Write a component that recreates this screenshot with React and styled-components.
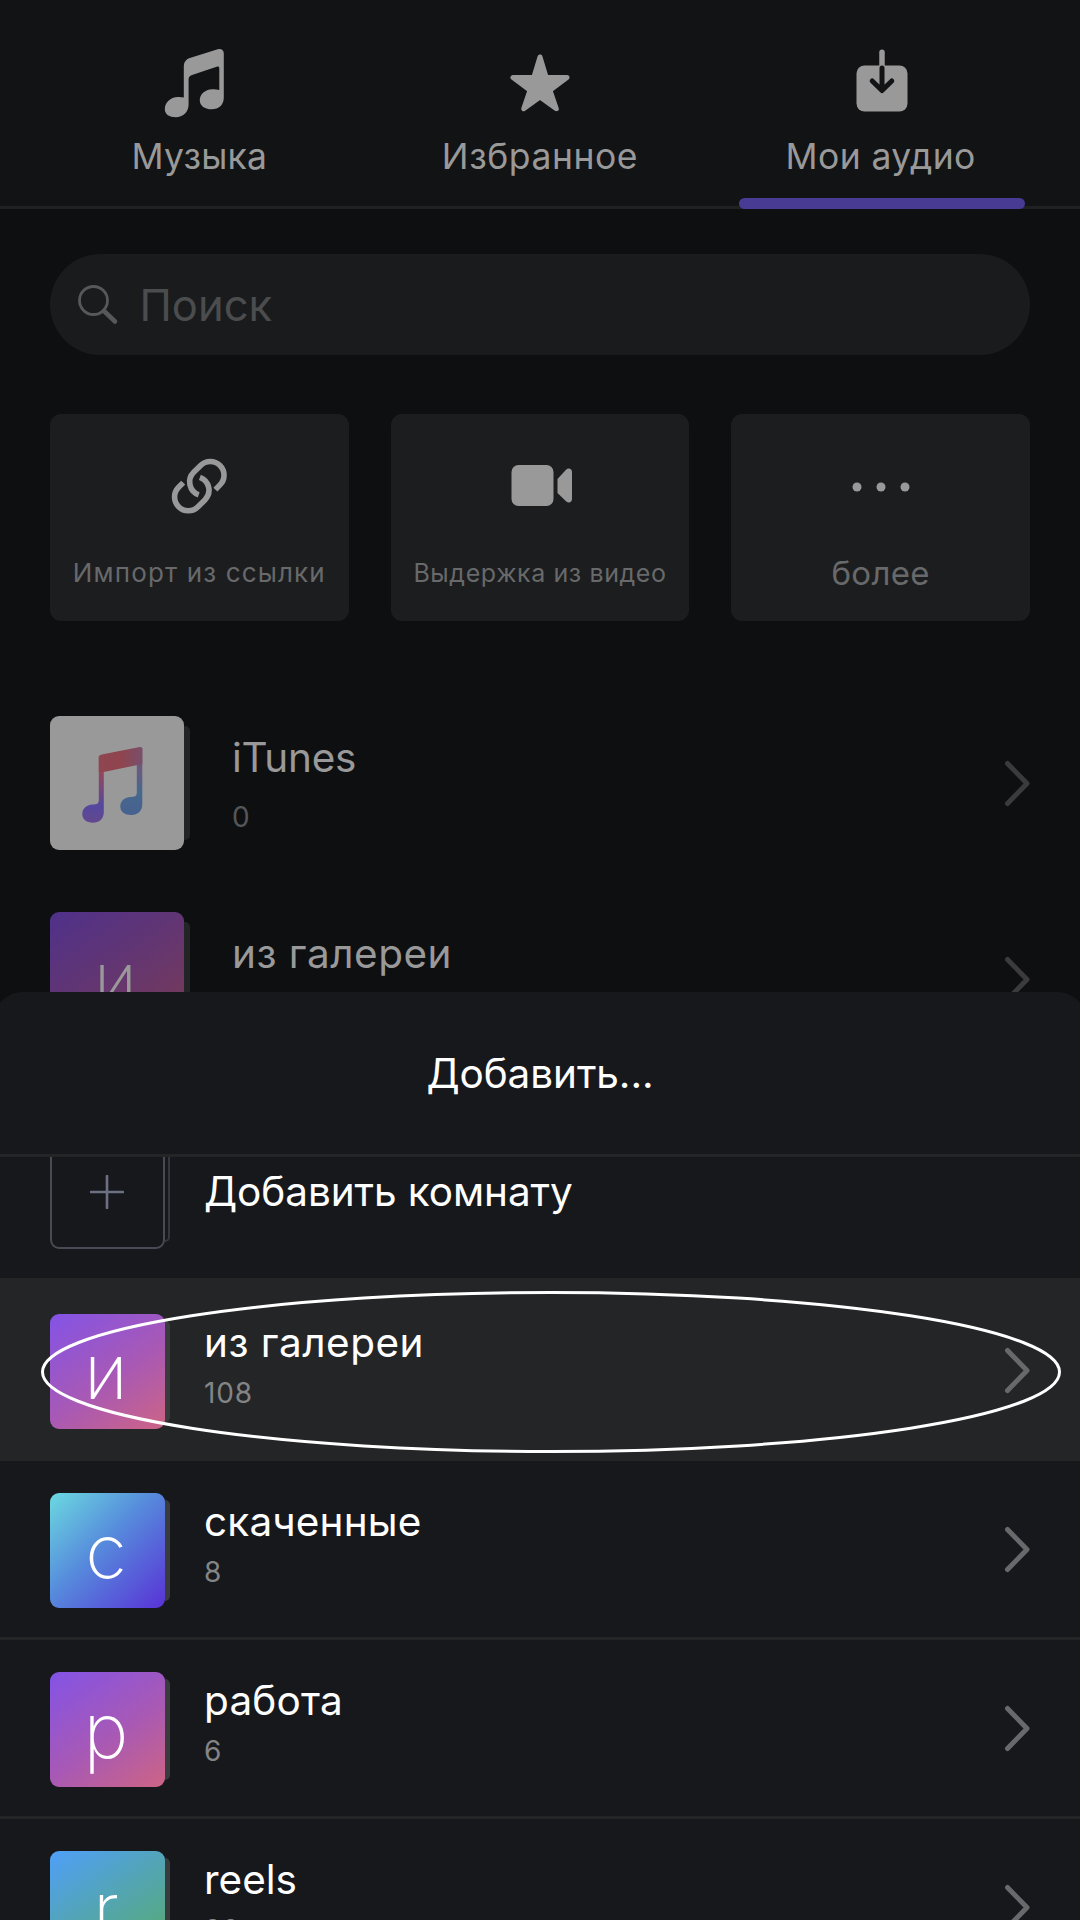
import React from "react";
import styled, { createGlobalStyle, css } from "styled-components";

const GlobalStyle = createGlobalStyle`
  *, *::before, *::after { box-sizing: border-box; }
  html, body { margin: 0; padding: 0; background: #0e0f11; }
  body { font-family: Inter, "Liberation Sans", sans-serif; overflow: hidden; }
  svg { display: block; flex: none; }
`;

const Screen = styled.main`
  position: relative;
  width: 1080px;
  height: 1920px;
  overflow: hidden;
  background: #0e0f11;
  color: #999;
`;

const TabBar = styled.nav`
  display: grid;
  grid-template-columns: repeat(3, 1fr);
  gap: 42px;
  height: 209px;
  padding: 0 50px;
  background: #121315;
  border-bottom: 3px solid #202123;
`;

const Tab = styled.div`
  position: relative;
  display: flex;
  flex-direction: column;
  align-items: center;
  padding-top: 48px;
`;

const TabLabel = styled.span`
  margin-top: 13.5px;
  font-size: 35.5px;
  line-height: 50px;
  letter-spacing: ${(p) => p.$spacing}px;
  white-space: nowrap;
`;

const ActiveMark = styled.i`
  position: absolute;
  left: 8px;
  bottom: -3px;
  width: 286px;
  height: 11px;
  border-radius: 6px;
  background: #483b93;
`;

const SearchField = styled.div`
  display: flex;
  align-items: center;
  height: 101px;
  margin: 45px 50px 0;
  padding: 0 28px;
  gap: 19.5px;
  border-radius: 51px;
  background: #1a1b1d;
  color: #4b4c4e;
  font-size: 43.5px;
  line-height: 60px;
`;

const Actions = styled.section`
  display: grid;
  grid-template-columns: repeat(3, 1fr);
  gap: 42px;
  margin: 59px 50px 0;
`;

const ActionCard = styled.div`
  display: flex;
  flex-direction: column;
  align-items: center;
  height: 207px;
  padding-top: 41px;
  border-radius: 11px;
  background: #1c1d1f;
`;

const ActionLabel = styled.span`
  margin-top: 34px;
  color: #68696a;
  font-size: ${(p) => p.$size}px;
  line-height: 40px;
  letter-spacing: ${(p) => p.$spacing}px;
  white-space: nowrap;
`;

const Library = styled.section`
  display: flex;
  flex-direction: column;
  gap: 61px;
  margin: 95px 50px 0;
`;

const LibraryRow = styled.div`
  display: flex;
  height: 135px;
`;

const Cover = styled.div`
  position: relative;
  flex: none;
  display: flex;
  align-items: center;
  justify-content: center;
  width: ${(p) => p.$size}px;
  height: ${(p) => p.$size}px;
  padding: ${(p) => (p.$letter ? "1px 3px 0 0" : "0")};
  border-radius: 9px;
  background: ${(p) => p.$fill};
  color: ${(p) => p.$ink || "#fff"};
  font-size: 76px;
  font-weight: 200;
  line-height: 115px;

  &::after {
    content: "";
    position: absolute;
    top: ${(p) => (p.$size > 120 ? 10 : 7)}px;
    bottom: ${(p) => (p.$size > 120 ? 10 : 7)}px;
    right: ${(p) => (p.$size > 120 ? -6 : -5)}px;
    width: ${(p) => (p.$size > 120 ? 6 : 5)}px;
    border-radius: 0 5px 5px 0;
    background: ${(p) => p.$back || "#3a3b3d"};
  }

  ${(p) =>
    p.$outlined &&
    css`
      padding-right: 1px;
      border: 2.4px solid #484b53;
      &::after {
        top: 5px;
        bottom: 5px;
        right: -7px;
        background: none;
        border: 2px solid #34363b;
        border-left: none;
      }
    `}
`;

const Texts = styled.div`
  display: flex;
  flex-direction: column;
  flex: 1;
  padding: ${(p) => p.$top}px 0 0 ${(p) => p.$left}px;
`;

const Name = styled.span`
  font-size: 40.5px;
  line-height: 54px;
  letter-spacing: ${(p) => p.$spacing || 0}px;
  white-space: nowrap;
`;

const Count = styled.span`
  margin-top: ${(p) => p.$gap}px;
  color: ${(p) => p.$ink};
  font-size: 28px;
  line-height: 36px;
  letter-spacing: 0.8px;
`;

const ChevronSlot = styled.div`
  display: flex;
  align-items: center;
`;

const Sheet = styled.section`
  position: absolute;
  top: 992px;
  left: -7px;
  right: -7px;
  height: 928px;
  overflow: hidden;
  border-radius: 30px 30px 0 0;
  background: #17181c;
  color: #fff;
`;

const SheetTitle = styled.h1`
  display: flex;
  justify-content: center;
  height: 165px;
  margin: 0;
  padding-top: 54.5px;
  border-bottom: 3px solid #242527;
  font-size: 40.5px;
  font-weight: 400;
  line-height: 54px;
  letter-spacing: -0.1px;
`;

const SheetList = styled.div`
  display: flex;
  flex-direction: column;
  height: 763px;
  overflow: hidden;
`;

const SheetRow = styled.div`
  display: flex;
  flex: none;
  height: ${(p) => (p.$selected ? 183 : 179)}px;
  padding: ${(p) => (p.$selected ? 35.5 : 32)}px 57px 0;
  border-bottom: ${(p) => (p.$selected ? 0 : 3)}px solid #242527;
  background: ${(p) => (p.$selected ? "#242527" : "transparent")};
`;

const AddRow = styled(SheetRow)`
  height: 144px;
  margin-top: -23px;
  padding-top: 0;
  border-bottom: none;
`;

const RowChevron = styled(ChevronSlot)`
  height: 114px;
`;

const Highlight = styled.svg`
  position: absolute;
  left: 40px;
  top: 1290px;
  pointer-events: none;
`;

const NoteIcon = () => (
  <svg width="62" height="70" viewBox="4.700 0 62 70" fill="#999" overflow="visible">
    <path d="M20.500 18.500C20.500 14 22.500 11.500 26.500 10L54.500 1.200C58 .4 60.500 2 60.500 5.500V49.500C60.500 57 55.500 61.300 48.500 61.300C42 61.300 37 58.300 36.500 53C36 46.500 41.500 41.500 49 41.200C51.500 41.100 53.800 41.300 56 42V20.500C56 18.800 55 18.300 53.400 18.800L29.500 26.800C26.500 27.900 25.300 29 25.300 31.500V56.500C25.300 64.500 19.500 69.200 12.500 69.200C6 69.200 1.500 66.500 1.500 61C1.500 54.500 7 49.200 14.500 48.900C16.800 48.800 19 49 20.500 49.500Z" />
  </svg>
);

const StarIcon = () => (
  <svg width="62" height="70" viewBox="0 0 62 70" fill="#999" stroke="#999" strokeWidth="5" strokeLinejoin="round">
    <path d="M31 9L37.200 29.500H58L41 42.200L47.300 60.700L31 49L14.700 60.700L21 42.200L4 29.500H24.800Z" />
  </svg>
);

const SaveIcon = () => (
  <svg width="62" height="70" viewBox="-1 0 62 70" fill="none" strokeLinecap="round" strokeLinejoin="round">
    <rect x="5.500" y="17.500" width="51" height="46" rx="8" fill="#999" />
    <path d="M31 4.300V18" stroke="#999" strokeWidth="5.500" />
    <path d="M31 20V42M21.200 33L31 42.500L40.800 33" stroke="#121315" strokeWidth="5" />
  </svg>
);

const SearchIcon = () => (
  <svg width="42" height="42" viewBox="0 0 42 42" fill="none" stroke="#575859" strokeLinecap="round">
    <circle cx="15.500" cy="16.500" r="14" strokeWidth="2.800" />
    <path d="M26 27L37 37.500" strokeWidth="4.600" />
  </svg>
);

const LinkIcon = () => (
  <svg width="64" height="64" viewBox="0 0 64 64" fill="none" stroke="#999" strokeWidth="5.600">
    <path d="M48.400 34.600L53 29.900A13.700 13.700 0 0 0 33.600 10.500L26.700 17.300A13.700 13.700 0 0 0 31.700 39.900" />
    <path d="M16.200 27.600L11.600 32.300A13.700 13.700 0 0 0 31 51.700L37.900 44.900A13.700 13.700 0 0 0 32.900 22.300" />
  </svg>
);

const VideoIcon = () => (
  <svg width="64" height="64" viewBox="-.5 1 64 64" fill="#999" overflow="visible">
    <rect x="3" y="11" width="42" height="41" rx="7" />
    <path d="M49 25L57.500 15.700C60 13.500 63.500 14.500 63.500 18V45C63.500 48.500 60 49.500 57.500 47.300L49 39Z" />
  </svg>
);

const MoreIcon = () => (
  <svg width="64" height="64" viewBox="0 0 64 64" fill="#999">
    <circle cx="8" cy="32" r="4.500" />
    <circle cx="32" cy="32" r="4.500" />
    <circle cx="56" cy="32" r="4.500" />
  </svg>
);

const ItunesIcon = () => (
  <svg width="60" height="76" viewBox="4.700 -2 60 76" overflow="visible">
    <defs>
      <linearGradient id="noteStem" x1="0" y1="0" x2="0" y2="1">
        <stop offset="0" stopColor="#8e4650" />
        <stop offset=".25" stopColor="#96485a" />
        <stop offset=".75" stopColor="#55489e" />
        <stop offset="1" stopColor="#62488e" />
      </linearGradient>
      <linearGradient id="noteRight" x1="0" y1="0" x2="0" y2="1">
        <stop offset="0" stopColor="#805068" />
        <stop offset=".35" stopColor="#685b80" />
        <stop offset=".65" stopColor="#46688e" />
        <stop offset="1" stopColor="#46618f" />
      </linearGradient>
      <linearGradient id="noteBeam">
        <stop offset="0" stopColor="#8e4650" />
        <stop offset=".5" stopColor="#90444d" />
        <stop offset="1" stopColor="#784f6c" />
      </linearGradient>
    </defs>
    <path fill="url(#noteStem)" d="M16.500 9L21.500 8V65C21.500 72 17 75.700 10.500 75.700C4.500 75.700 0 72.500 0 67C0 61.500 4 58 10 57.500C14 57.300 16.500 57.500 16.500 53Z" />
    <path fill="url(#noteRight)" d="M54.500 2L60 1V57C60 64 55.500 68 49 68C42.500 68 38 65 38 59.500C38 54 42 50.400 48 50C52 49.800 54.500 49.500 54.500 45.500Z" />
    <path fill="url(#noteBeam)" d="M16.500 11C16.500 9 17.300 8 19.500 7.500L57.500 0C59.300-.2 60 .6 60 2.500V17L21.500 25H16.500Z" />
  </svg>
);

const Chevron = ({ color }) => (
  <svg width="28" height="48" viewBox="0 .5 28 48" fill="none" stroke={color} strokeWidth="5" strokeLinecap="round" strokeLinejoin="round">
    <path d="M5.500 4L25 24L5.500 44" />
  </svg>
);

const tabs = [
  { label: "Музыка", Icon: NoteIcon, spacing: 0.2 },
  { label: "Избранное", Icon: StarIcon, spacing: 0.55 },
  { label: "Мои аудио", Icon: SaveIcon, spacing: 0.4, active: true },
];

const actions = [
  { label: "Импорт из ссылки", Icon: LinkIcon, size: 26, spacing: 1.15 },
  { label: "Выдержка из видео", Icon: VideoIcon, size: 25, spacing: 0.6 },
  { label: "более", Icon: MoreIcon, size: 33, spacing: 0.3 },
];

const violet = "linear-gradient(145deg, #8353e6 0%, #a859b5 55%, #cd6484 100%)";
const rooms = [
  { name: "из галереи", count: 108, letter: "и", fill: violet, selected: true, spacing: 0.5 },
  { name: "скаченные", count: 8, letter: "с", fill: "linear-gradient(135deg, #6bd9e0 0%, #568bdc 45%, #5932d6 100%)", spacing: 0.15 },
  { name: "работа", count: 6, letter: "р", fill: violet, spacing: 0.2 },
  { name: "reels", count: 38, letter: "r", fill: "linear-gradient(145deg, #4f9ff9 0%, #53a5b4 45%, #57ab62 100%)" },
];

export default function App() {
  return (
    <Screen>
      <GlobalStyle />
      <TabBar>
        {tabs.map(({ label, Icon, spacing, active }) => (
          <Tab key={label}>
            <Icon />
            <TabLabel $spacing={spacing}>{label}</TabLabel>
            {active && <ActiveMark />}
          </Tab>
        ))}
      </TabBar>
      <SearchField>
        <SearchIcon />
        <span>Поиск</span>
      </SearchField>
      <Actions>
        {actions.map(({ label, Icon, size, spacing }) => (
          <ActionCard key={label}>
            <Icon />
            <ActionLabel $size={size} $spacing={spacing}>{label}</ActionLabel>
          </ActionCard>
        ))}
      </Actions>
      <Library>
        <LibraryRow>
          <Cover $size={134} $fill="#999" $back="#232426"><ItunesIcon /></Cover>
          <Texts $top={15} $left={48}>
            <Name $spacing={-0.3}>iTunes</Name>
            <Count $gap={14} $ink="#555658">0</Count>
          </Texts>
          <ChevronSlot><Chevron color="#3b3b3d" /></ChevronSlot>
        </LibraryRow>
        <LibraryRow>
          <Cover $size={134} $letter $fill="linear-gradient(145deg, #4f318a 0%, #65366f 50%, #7b3c4f 100%)" $ink="#999" $back="#232426">и</Cover>
          <Texts $top={15} $left={48}>
            <Name $spacing={0.5}>из галереи</Name>
          </Texts>
          <ChevronSlot><Chevron color="#3b3b3d" /></ChevronSlot>
        </LibraryRow>
      </Library>

      <Sheet>
        <SheetTitle>Добавить...</SheetTitle>
        <SheetList>
          <AddRow>
            <Cover $size={115} $outlined $fill="transparent">
              <svg width="34" height="34" viewBox="0 0 34 34" stroke="#6d7080" strokeWidth="2.600" strokeLinecap="round">
                <path d="M17 1V33M1 17H33" />
              </svg>
            </Cover>
            <Texts $top={31} $left={39}><Name $spacing={-0.08}>Добавить комнату</Name></Texts>
          </AddRow>
          {rooms.map((room) => (
            <SheetRow key={room.name} $selected={room.selected}>
              <Cover $size={115} $letter $fill={room.fill}>{room.letter}</Cover>
              <Texts $top={2} $left={39}>
                <Name $spacing={room.spacing}>{room.name}</Name>
                <Count $gap={5} $ink="#838486">{room.count}</Count>
              </Texts>
              <RowChevron><Chevron color="#68696b" /></RowChevron>
            </SheetRow>
          ))}
        </SheetList>
      </Sheet>
      <Highlight width="1024" height="166" viewBox="0 0 1024 166" fill="none" stroke="#fff" strokeWidth="3">
        <ellipse cx="511" cy="82" rx="508.500" ry="79.500" />
      </Highlight>
    </Screen>
  );
}
